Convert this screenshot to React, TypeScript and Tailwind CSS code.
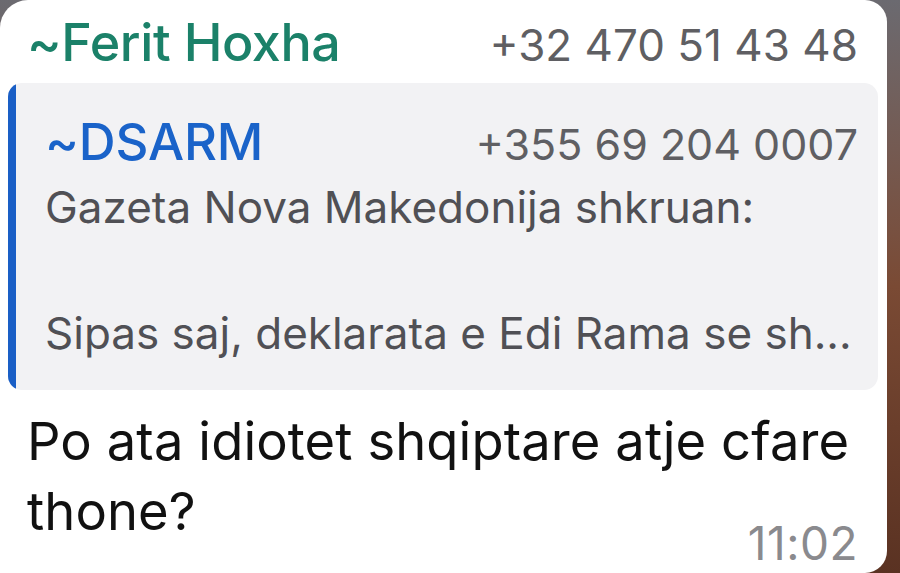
export default function App() {
  return (
    <div
      className="w-[900px] h-[573px] overflow-hidden bg-gradient-to-b from-[#6b6a70] via-[#7a4a34] to-[#5a3222]"
      style={{ fontFamily: 'Inter, "Liberation Sans", sans-serif' }}
    >
      <div className="h-[573px] w-[887px] bg-white rounded-tl-[28px] rounded-tr-[22px] rounded-br-[22px] flex flex-col">
        {/* sender */}
        <div className="h-[83px] flex items-baseline justify-between pl-[27px] pr-[29px] pt-[13px]">
          <span className="text-[52px] leading-[60px] font-medium text-[#1b8169] tracking-[-0.4px]">~Ferit Hoxha</span>
          <span className="text-[44px] leading-[60px] text-[#5f5f63]">+32 470 51 43 48</span>
        </div>

        {/* quoted message */}
        <div className="ml-[8px] mr-[9px] h-[307px] rounded-[14px] bg-[#f2f2f4] flex overflow-hidden">
          <div className="w-[8px] bg-[#1a5fc6] rounded-l-[14px]" />
          <div className="flex-1 pl-[29px] pr-[20px] pt-[30px]">
            <div className="flex items-baseline justify-between">
              <span className="text-[51px] leading-[58px] font-medium text-[#1a63c9] tracking-[-0.2px]">~DSARM</span>
              <span className="text-[43px] leading-[58px] text-[#5f5f63]">+355 69 204 0007</span>
            </div>
            <div className="text-[44px] leading-[63px] text-[#505055] mt-[3px] whitespace-nowrap">
              <p>Gazeta Nova Makedonija shkruan:</p>
              <p>&nbsp;</p>
              <p>Sipas saj, deklarata e Edi Rama se sh...</p>
            </div>
          </div>
        </div>

        {/* message body */}
        <div className="relative flex-1 pl-[27px] pr-[20px] pt-[16px]">
          <p className="text-[52.5px] leading-[70px] text-[#111111] whitespace-nowrap tracking-[0.1px]">
            Po ata idiotet shqiptare atje cfare
            <br />
            thone?
          </p>
          <span className="absolute right-[29px] bottom-[8px] text-[46px] leading-[44px] text-[#8a8a8e] tracking-[0.5px]">11:02</span>
        </div>
      </div>
    </div>
  );
}
